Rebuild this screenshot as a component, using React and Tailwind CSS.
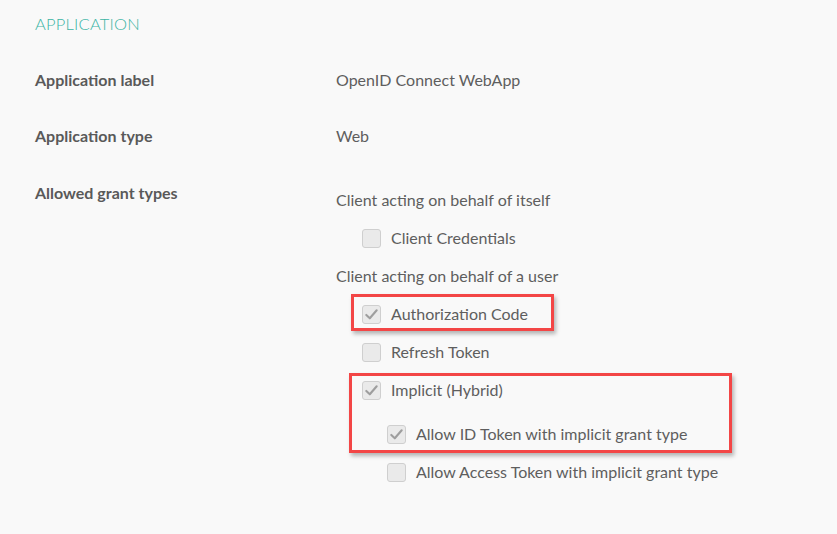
import React from "react";

function Checkbox({ checked }) {
  return (
    <span className="flex h-[19px] w-[19px] shrink-0 items-center justify-center rounded-[3px] border border-[#cfcfcf] bg-[#eaeaea]">
      {checked && (
        <svg viewBox="0 0 18 18" className="h-[17px] w-[17px]">
          <path d="M3.5 9.5 L7.2 13 L14.5 4.5" fill="none" stroke="#9e9e9e" strokeWidth="2.2" strokeLinecap="round" strokeLinejoin="round" />
        </svg>
      )}
    </span>
  );
}

function CheckRow({ label, checked, indent, className = "", children }) {
  return (
    <div className={`relative flex h-[38px] items-center gap-[10px] ${indent ? "pl-[51px]" : "pl-[26px]"} ${className}`}>
      <Checkbox checked={checked} />
      <span>{label}</span>
      {children}
    </div>
  );
}

function Callout({ className }) {
  return (
    <div className={`pointer-events-none absolute border-[3px] border-[#f34646] shadow-[2px_3px_4px_rgba(0,0,0,0.28)] ${className}`} />
  );
}

export default function App() {
  return (
    <div
      className="relative h-[534px] w-[837px] overflow-hidden bg-[#f9f9f9] text-[16px] text-[#5e5e5e]"
      style={{ fontFamily: "Lato, 'Open Sans', sans-serif" }}
    >
      <div className="pl-[35px] pt-[14px]">
        <h2 className="text-[16.5px] font-light leading-[20px] tracking-[0.2px] text-[#3db5a5]">APPLICATION</h2>
      </div>

      <div className="mt-[18px] flex h-[56px] items-center">
        <div className="w-[336px] shrink-0 pl-[35px] font-bold text-[#595959]">Application label</div>
        <div>OpenID Connect WebApp</div>
      </div>
      <div className="flex h-[56px] items-center">
        <div className="w-[336px] shrink-0 pl-[35px] font-bold text-[#595959]">Application type</div>
        <div>Web</div>
      </div>

      <div className="flex">
        <div className="w-[336px] shrink-0 pl-[35px] pt-[19px] font-bold leading-[20px] text-[#595959]">Allowed grant types</div>
        <div className="relative flex-1 pt-[17px]">
          <div className="flex h-[38px] items-center">Client acting on behalf of itself</div>
          <CheckRow label="Client Credentials" />
          <div className="flex h-[38px] items-center">Client acting on behalf of a user</div>
          <CheckRow label="Authorization Code" checked>
            <Callout className="left-[15px] top-[-1px] h-[37px] w-[203px]" />
          </CheckRow>
          <CheckRow label="Refresh Token" />
          <CheckRow label="Implicit (Hybrid)" checked>
            <Callout className="left-[13px] top-[2px] h-[80px] w-[383px]" />
          </CheckRow>
          <CheckRow label="Allow ID Token with implicit grant type" checked indent className="mt-[6px]" />
          <CheckRow label="Allow Access Token with implicit grant type" indent />
        </div>
      </div>
    </div>
  );
}
